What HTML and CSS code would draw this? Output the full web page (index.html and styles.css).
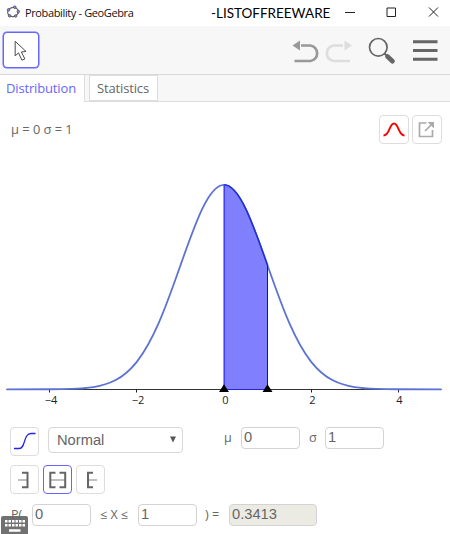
FILE: index.html
```html
<!DOCTYPE html>
<html lang="en">
<head>
<meta charset="utf-8">
<title>Probability - GeoGebra</title>
<link rel="stylesheet" href="styles.css">
</head>
<body>
<header class="titlebar">
  <svg class="logo" width="14" height="14" viewBox="0 0 14 14"><ellipse cx="7" cy="7" rx="5.4" ry="4.5" transform="rotate(-15 7 7)" fill="none" stroke="#666" stroke-width="1.200"/><g fill="#8c8cf0" stroke="#444" stroke-width=".7"><circle cx="8.800" cy="2.200" r="1.300"/><circle cx="2.600" cy="4.800" r="1.300"/><circle cx="12.300" cy="6.600" r="1.300"/><circle cx="3.600" cy="10.800" r="1.300"/><circle cx="9.600" cy="11" r="1.300"/></g></svg>
  <span class="app-name">Probability - GeoGebra</span>
  <span class="watermark">-LISTOFFREEWARE</span>
  <svg class="window-buttons" width="104" height="26" viewBox="0 0 104 26" fill="none" stroke="#222"><path d="M0 12.500h10M42 8h8.500v8.500H42zM84 7.500l9 9M93 7.500l-9 9"/></svg>
</header>
<div class="toolbar">
  <button class="tool" aria-label="Move"><svg width="33" height="33" viewBox="0 0 34 34"><path d="M11.500 7.500v15l3.500-3 3.500 7.500 3-1.300-3.600-7.200 4.800-.5z" fill="#fff" stroke="#444" stroke-linejoin="round"/></svg></button>
  <svg class="actions" width="150" height="48" viewBox="290 26 150 48" fill="none">
    <path d="M301 45.500h9.500a7.500 7.800 0 0 1 0 15.500H294.500" stroke="#999" stroke-width="2.700"/><path d="M292.500 45.500l7.500-5v10z" fill="#999"/>
    <path d="M343 45.500h-9.500a7.500 7.800 0 0 0 0 15.500H350" stroke="#ddd" stroke-width="2.700"/><path d="M352 45.500l-7.500-5v10z" fill="#ddd"/>
    <circle cx="378.300" cy="47.300" r="8.800" stroke="#666" stroke-width="1.700"/><path d="M384.500 53.500l3 3" stroke="#666" stroke-width="2"/><path d="M387.500 56.500l5 4.700" stroke="#666" stroke-width="4.600" stroke-linecap="round"/>
    <path d="M413 41.800h24.500M413 50.500h24.500M413 59.300h24.500" stroke="#666" stroke-width="3"/>
  </svg>
</div>
<nav class="tabs">
  <div class="tab active"><span class="tab-text">Distribution</span></div>
  <div class="tab second"><span class="tab-text">Statistics</span></div>
</nav>
<main>
  <section class="summary">
    <span class="params">μ = 0 σ = 1</span>
    <button class="icon-button" aria-label="Normal curve"><svg width="28" height="27" viewBox="0 0 28 27"><path d="M3.500 19.500C10 19.500 9 7.500 14 7.500S18 19.500 24.500 19.500" fill="none" stroke="red" stroke-width="1.900"/></svg></button>
    <button class="icon-button" aria-label="Export"><svg width="28" height="27" viewBox="0 0 28 27" fill="none" stroke="#aaa" stroke-width="1.700"><path d="M13.500 7H6.500v13.500h13V14M12 15l6.500-6.500"/><path d="M14.500 6h6.500v6.500z" fill="#aaa" stroke="none"/></svg></button>
  </section>
  <svg class="chart" width="450" height="266" viewBox="0 144 450 266">
    <path d="M6.500 389.500h435" stroke="#333"/>
    <path d="M49.500 389v3.500M136.500 389v3.500M311.500 389v3.500M398.500 389v3.500" stroke="#222"/>
    <g transform="translate(224 389.300)" fill="none">
      <path d="M0 0V-204.500C7.250 -204.500 14.500 -195.510 21.750 -180.470C29 -165.430 36.250 -144.700 43.500 -124.030V0z" fill="#8080ff"/>
      <g stroke="#5c73d3" stroke-width="1.800">
        <path id="tail" d="M0 -204.500C7.250 -204.500 14.500 -195.510 21.750 -180.470C29 -165.430 36.250 -144.700 43.500 -124.030C50.750 -103.360 58 -82.990 65.250 -66.390C72.500 -49.790 79.750 -36.910 87 -27.680C94.250 -18.450 101.500 -12.720 108.750 -8.980C116 -5.240 123.250 -3.410 130.500 -2.270C137.750 -1.130 145 -.710 152.250 -.450C159.500 -.200 166.750 -.100 174 -.070L217.500 0"/>
        <use href="#tail" transform="scale(-1 1)"/>
      </g>
      <path d="M0 -204.500C7.250 -204.500 14.500 -195.510 21.750 -180.470C29 -165.430 36.250 -144.700 43.500 -124.030" stroke="#2030d0" stroke-width="1.500"/>
      <path d="M0 .200H43.500" stroke="#2222ef"/>
      <path d="M.200 0V-204.500" stroke="#3d3dff" stroke-width="1.500"/><path d="M43.500 0V-124" stroke="#0c0ce0"/>
      <path d="M-5 2.700L0 -5L5 2.700zM38.500 2.700L43.500 -5L48.500 2.700z" fill="#000"/>
    </g>
    <g class="axis-label"><text x="51" y="404">−4</text><text x="138" y="404">−2</text><text x="225.300" y="404">0</text><text x="312.300" y="404">2</text><text x="399.300" y="404">4</text></g>
  </svg>
  <section class="distribution">
    <button class="icon-button" aria-label="Cumulative"><svg width="28" height="27" viewBox="0 0 28 27"><path d="M3 20.500H8C15 20.500 12 5.500 20 5.500h4.500" fill="none" stroke="#22e" stroke-width="1.300"/></svg></button>
    <div class="select"><span>Normal</span><svg width="6" height="7" viewBox="0 0 6 7"><path d="M0 .500h6L3 6.500z" fill="#555"/></svg></div>
    <span class="label mu">μ</span><div class="field">0</div>
    <span class="label sigma">σ</span><div class="field">1</div>
  </section>
  <section class="intervals">
    <button class="icon-button" aria-label="Left sided"><svg width="28" height="28" viewBox="0 0 28 28" fill="none"><path d="M7 14h9" stroke="#aaa" stroke-width="1.400"/><path d="M11 6.700h5.500v14.500H11" stroke="#666" stroke-width="2"/></svg></button>
    <button class="icon-button chosen" aria-label="Interval"><svg width="28" height="28" viewBox="0 0 28 28" fill="none"><path d="M7 14h14" stroke="#aaa" stroke-width="1.400"/><path d="M11.500 6.700H6.300v14.500h5.200M15.500 6.700h5.700v14.500h-5.700" stroke="#666" stroke-width="2"/></svg></button>
    <button class="icon-button" aria-label="Right sided"><svg width="28" height="28" viewBox="0 0 28 28" fill="none"><path d="M11 14h9" stroke="#aaa" stroke-width="1.400"/><path d="M16 6.700h-5v14.500h5" stroke="#666" stroke-width="2"/></svg></button>
  </section>
  <section class="probability">
    <span class="label open">P(</span><div class="field">0</div>
    <span class="label between">≤ X ≤</span><div class="field">1</div>
    <span class="label equals">) =</span><div class="field result">0.3413</div>
  </section>
</main>
<svg class="keyboard" width="27" height="18" viewBox="0 0 27 18"><rect width="27" height="20" rx="2" fill="#666"/><path d="M4 5.300h20M4 9.300h20" stroke="#fff" stroke-width="2.500" stroke-dasharray="2.500 1"/><path d="M8 14.500h11.500" stroke="#fff" stroke-width="2.500"/></svg>
</body>
</html>
```

FILE: styles.css
```css
* { box-sizing: border-box; }
body {
  margin: 0;
  width: 450px;
  height: 534px;
  overflow: hidden;
  position: relative;
  background: #fff;
  color: #666;
  font-family: "Open Sans", "Noto Sans", sans-serif;
}
svg { display: block; flex: none; }
button { padding: 0; font: inherit; }
.titlebar {
  display: flex;
  align-items: center;
  height: 26px;
  padding-left: 6px;
  color: #111;
  white-space: nowrap;
}
.logo { margin-top: -2px; }
.app-name {
  width: 187px;
  padding-left: 5px;
  font-size: 11px;
  letter-spacing: -.370px;
  line-height: 24px;
}
.watermark {
  width: 138px;
  padding-left: 4px;
  color: #000;
  font: 13.500px/23px Lato, sans-serif;
  letter-spacing: -.010px;
}
.toolbar {
  display: flex;
  justify-content: space-between;
  height: 49px;
  padding: 6px 10px 0 3px;
  background: #f7f7f7;
  border-bottom: 1px solid #d8d8d8;
}
.tool {
  width: 36px;
  height: 36px;
  border: 1px solid #6666ff;
  border-radius: 4px;
  box-shadow: 0 0 0 .500px #6666ff;
  background: #fff;
  overflow: hidden;
}
.actions { margin-top: -6px; }
.tabs {
  display: flex;
  height: 27px;
  background: #f7f7f7;
  border-bottom: 1px solid #ddd;
}
.tab {
  height: 26px;
  padding-left: 7px;
  border: 1px solid #ddd;
  background: #fff;
  font-size: 13px;
  letter-spacing: -.150px;
  line-height: 25px;
  white-space: nowrap;
}
.active {
  width: 85px;
  height: 27px;
  padding-left: 6px;
  border-width: 0 1px 0 0;
  color: #6666ff;
  line-height: 27px;
}
.second { width: 69px; margin-left: 4px; }
.summary {
  display: flex;
  gap: 3px;
  height: 42px;
  padding: 13px 8px 0 11px;
}
.params {
  flex: 1;
  font-size: 12.800px;
  line-height: 28px;
}
.icon-button {
  width: 29px;
  height: 29px;
  border: 1px solid #ddd;
  border-radius: 4px;
  background: #fff;
  overflow: hidden;
}
.summary .icon-button { width: 30px; }
.axis-label {
  font: 11px "Open Sans", sans-serif;
  fill: #222;
  text-anchor: middle;
}
.distribution {
  display: flex;
  height: 55px;
  padding: 17px 0 0 10px;
}
.select {
  display: flex;
  align-items: center;
  justify-content: space-between;
  width: 135px;
  height: 26px;
  margin-left: 9px;
  padding: 0 6px 1px 8px;
  border: 1px solid #d8d8d8;
  border-radius: 4px;
  font: 14.700px "Liberation Sans", sans-serif;
}
.label {
  font-size: 12.500px;
  line-height: 22px;
  white-space: pre;
}
.mu { width: 58px; padding-left: 41px; }
.sigma { width: 25px; padding-left: 9px; }
.field {
  width: 59px;
  height: 22px;
  padding-left: 2px;
  border: 1px solid #d3d3d3;
  border-radius: 4px;
  font: 14.700px/18px "Liberation Sans", sans-serif;
}
.intervals {
  display: flex;
  gap: 4px;
  height: 39px;
  padding-left: 10px;
}
.icon-button.chosen { border-color: #6666ff; }
.probability {
  display: flex;
  padding-left: 11px;
}
.open { width: 21px; }
.between { width: 47px; padding-left: 9px; }
.equals { width: 32px; padding-left: 8px; }
.result { width: 88px; background: #ebebe4; }
.keyboard {
  position: absolute;
  left: 1px;
  bottom: 0;
  opacity: .920;
}
```
